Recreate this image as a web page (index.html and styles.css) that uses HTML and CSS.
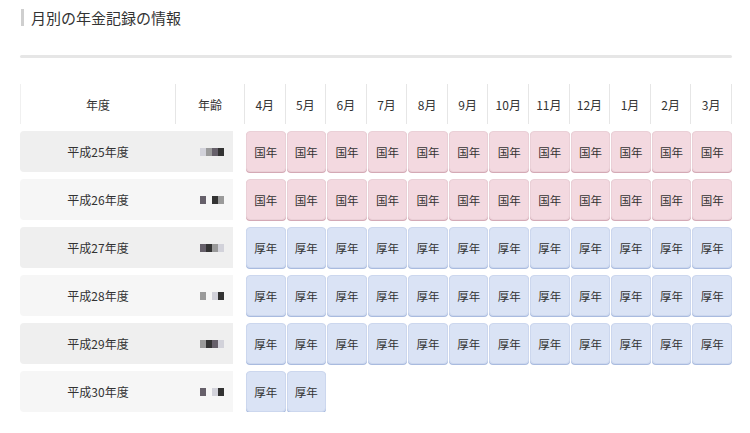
FILE: index.html
```html
<!DOCTYPE html>
<html lang="ja">
<head>
<meta charset="utf-8">
<link rel="stylesheet" href="styles.css">
</head>
<body>
<div class="page">
  <h2 class="title">月別の年金記録の情報</h2>
  <div class="rule"></div>
  <div class="grid">
    <div class="th th-first">年度</div>
    <div class="th">年齢</div>
    <div class="th">4月</div><div class="th">5月</div><div class="th">6月</div><div class="th">7月</div>
    <div class="th">8月</div><div class="th">9月</div><div class="th">10月</div><div class="th">11月</div>
    <div class="th">12月</div><div class="th">1月</div><div class="th">2月</div><div class="th">3月</div>

    <div class="year odd">平成25年度</div>
    <div class="age odd"><span class="px p1"></span><span class="px p2"></span><span class="px p3"></span><span class="px p4"></span></div>
    <div class="m"><span class="c kok">国年</span></div><div class="m"><span class="c kok">国年</span></div><div class="m"><span class="c kok">国年</span></div><div class="m"><span class="c kok">国年</span></div>
    <div class="m"><span class="c kok">国年</span></div><div class="m"><span class="c kok">国年</span></div><div class="m"><span class="c kok">国年</span></div><div class="m"><span class="c kok">国年</span></div>
    <div class="m"><span class="c kok">国年</span></div><div class="m"><span class="c kok">国年</span></div><div class="m"><span class="c kok">国年</span></div><div class="m"><span class="c kok">国年</span></div>

    <div class="year even">平成26年度</div>
    <div class="age even"><span class="px p3"></span><span class="px p0"></span><span class="px p4"></span><span class="px p2"></span></div>
    <div class="m"><span class="c kok">国年</span></div><div class="m"><span class="c kok">国年</span></div><div class="m"><span class="c kok">国年</span></div><div class="m"><span class="c kok">国年</span></div>
    <div class="m"><span class="c kok">国年</span></div><div class="m"><span class="c kok">国年</span></div><div class="m"><span class="c kok">国年</span></div><div class="m"><span class="c kok">国年</span></div>
    <div class="m"><span class="c kok">国年</span></div><div class="m"><span class="c kok">国年</span></div><div class="m"><span class="c kok">国年</span></div><div class="m"><span class="c kok">国年</span></div>

    <div class="year odd">平成27年度</div>
    <div class="age odd"><span class="px p3"></span><span class="px p4"></span><span class="px p2"></span><span class="px p1"></span></div>
    <div class="m"><span class="c kou">厚年</span></div><div class="m"><span class="c kou">厚年</span></div><div class="m"><span class="c kou">厚年</span></div><div class="m"><span class="c kou">厚年</span></div>
    <div class="m"><span class="c kou">厚年</span></div><div class="m"><span class="c kou">厚年</span></div><div class="m"><span class="c kou">厚年</span></div><div class="m"><span class="c kou">厚年</span></div>
    <div class="m"><span class="c kou">厚年</span></div><div class="m"><span class="c kou">厚年</span></div><div class="m"><span class="c kou">厚年</span></div><div class="m"><span class="c kou">厚年</span></div>

    <div class="year even">平成28年度</div>
    <div class="age even"><span class="px p2"></span><span class="px p0"></span><span class="px p1"></span><span class="px p4"></span></div>
    <div class="m"><span class="c kou">厚年</span></div><div class="m"><span class="c kou">厚年</span></div><div class="m"><span class="c kou">厚年</span></div><div class="m"><span class="c kou">厚年</span></div>
    <div class="m"><span class="c kou">厚年</span></div><div class="m"><span class="c kou">厚年</span></div><div class="m"><span class="c kou">厚年</span></div><div class="m"><span class="c kou">厚年</span></div>
    <div class="m"><span class="c kou">厚年</span></div><div class="m"><span class="c kou">厚年</span></div><div class="m"><span class="c kou">厚年</span></div><div class="m"><span class="c kou">厚年</span></div>

    <div class="year odd">平成29年度</div>
    <div class="age odd"><span class="px p2"></span><span class="px p4"></span><span class="px p3"></span><span class="px p1"></span></div>
    <div class="m"><span class="c kou">厚年</span></div><div class="m"><span class="c kou">厚年</span></div><div class="m"><span class="c kou">厚年</span></div><div class="m"><span class="c kou">厚年</span></div>
    <div class="m"><span class="c kou">厚年</span></div><div class="m"><span class="c kou">厚年</span></div><div class="m"><span class="c kou">厚年</span></div><div class="m"><span class="c kou">厚年</span></div>
    <div class="m"><span class="c kou">厚年</span></div><div class="m"><span class="c kou">厚年</span></div><div class="m"><span class="c kou">厚年</span></div><div class="m"><span class="c kou">厚年</span></div>

    <div class="year even">平成30年度</div>
    <div class="age even"><span class="px p3"></span><span class="px p0"></span><span class="px p1"></span><span class="px p4"></span></div>
    <div class="m"><span class="c kou">厚年</span></div><div class="m"><span class="c kou">厚年</span></div>
  </div>
</div>
</body>
</html>
```
FILE: styles.css
```css
* { box-sizing: border-box; }
html, body { margin: 0; padding: 0; background: #fff; }
body {
  font-family: "Noto Sans CJK JP", "Noto Sans", sans-serif;
  color: #333;
}
.page {
  width: 750px;
  padding: 9px 18px 0 20px;
}
.title {
  margin: 0 0 0 1px;
  padding-left: 7px;
  border-left: 3px solid #cfcfcf;
  font-size: 15px;
  font-weight: normal;
  line-height: 17px;
  color: #333;
}
.rule {
  margin-top: 29px;
  height: 3px;
  border-radius: 2px;
  background: #e6e6e6;
}
.grid {
  margin-top: 26px;
  display: grid;
  grid-template-columns: 156px 69px repeat(12, 1fr);
  grid-template-rows: 40px;
  grid-auto-rows: 41px;
  row-gap: 7px;
  font-size: 12px;
}
.th {
  height: 40px;
  display: flex;
  align-items: center;
  justify-content: center;
  border-right: 1px solid #e6e6e6;
  color: #333;
}
.th-first { border-left: 1px solid #f0f0f0; }
.year {
  display: flex;
  align-items: center;
  justify-content: center;
  font-size: 12px;
  border-radius: 4px 0 0 4px;
}
.age {
  display: flex;
  align-items: center;
  padding-left: 24px;
  margin-right: 12px;
}
.odd { background: #efefef; }
.even { background: #f6f6f6; }
.px {
  display: inline-block;
  width: 6px;
  height: 8px;
}
.p0 { background: transparent; }
.p1 { background: #d2d2da; }
.p2 { background: #9a9a9a; }
.p3 { background: #66606a; }
.p4 { background: #333; }
.m {
  padding-left: 1px;
  display: flex;
}
.c {
  flex: 1;
  display: flex;
  align-items: center;
  justify-content: center;
  border-radius: 4px;
  font-size: 11.5px;
  color: #333;
  border: 1px solid;
}
.kok {
  background: #f3d9e0;
  border-color: #ead0d7;
  box-shadow: 0 1px 0 #d4a9b5;
}
.kou {
  background: #dae3f5;
  border-color: #ccd7ee;
  box-shadow: 0 1px 0 #a9bbdf;
}
```
